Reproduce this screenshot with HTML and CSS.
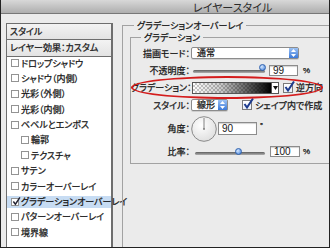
FILE: index.html
```html
<!DOCTYPE html>
<html lang="ja">
<head>
  <meta charset="UTF-8">
  <title>レイヤースタイル</title>
  <link rel="stylesheet" href="styles.css">
</head>
<body>
  <div class="window">
    <!-- タイトルバー -->
    <div class="titlebar">レイヤースタイル</div>

    <div class="main">
      <!-- 左のスタイル一覧 -->
      <div class="sidebar">
        <div class="side-head first">スタイル</div>
        <div class="side-head">レイヤー効果：カスタム</div>
        <ul class="fx-list">
          <li><span class="cb"></span>ドロップシャドウ</li>
          <li><span class="cb"></span>シャドウ（内側）</li>
          <li><span class="cb"></span>光彩（外側）</li>
          <li><span class="cb"></span>光彩（内側）</li>
          <li><span class="cb"></span>ベベルとエンボス</li>
          <li class="sub"><span class="cb"></span>輪郭</li>
          <li class="sub"><span class="cb"></span>テクスチャ</li>
          <li><span class="cb"></span>サテン</li>
          <li><span class="cb"></span>カラーオーバーレイ</li>
          <li class="on"><span class="cb checked"><svg viewBox="0 0 10 10"><path d="M1.5 5 3.8 8 8.8 0.5" /></svg></span>グラデーションオーバーレイ</li>
          <li><span class="cb"></span>パターンオーバーレイ</li>
          <li><span class="cb"></span>境界線</li>
        </ul>
      </div>

      <!-- 右の設定パネル -->
      <div class="panel">
        <fieldset class="group outer">
          <legend>グラデーションオーバーレイ</legend>
          <fieldset class="group inner">
            <legend>グラデーション</legend>

            <div class="row">
              <span class="lbl">描画モード：</span>
              <div class="select mode">
                <span class="val">通常</span>
                <span class="stepper"><svg width="5" height="8" viewBox="0 0 5 8"><path d="M2.5 0 5 3H0zM2.5 8 5 5H0z"/></svg></span>
              </div>
            </div>

            <div class="row">
              <span class="lbl">不透明度：</span>
              <div class="slider opacity">
                <span class="track"></span>
                <span class="thumb"></span>
              </div>
              <span class="num op-num">99</span>
              <span class="pct">%</span>
            </div>

            <div class="row">
              <span class="lbl">グラデーション：</span>
              <span class="grad"></span>
              <span class="grad-btn"><svg width="5" height="4" viewBox="0 0 5 4"><path d="M0 0H5L2.5 4z"/></svg></span>
              <span class="check"><svg viewBox="0 0 12 12"><path d="M2.5 6 5 9.5 11 0.5" /></svg></span>
              <span class="opt">逆方向</span>
            </div>

            <div class="row">
              <span class="lbl">スタイル：</span>
              <div class="select style-sel">
                <span class="val">線形</span>
                <span class="stepper"><svg width="5" height="8" viewBox="0 0 5 8"><path d="M2.5 0 5 3H0zM2.5 8 5 5H0z"/></svg></span>
              </div>
              <span class="check shape"><svg viewBox="0 0 12 12"><path d="M2.5 6 5 9.5 11 0.5" /></svg></span>
              <span class="opt">シェイプ内で作成</span>
            </div>

            <div class="row tall">
              <span class="lbl">角度：</span>
              <svg class="dial" width="26" height="26" viewBox="0 0 26 26">
                <defs>
                  <radialGradient id="dialFill" cx="40%" cy="35%" r="70%">
                    <stop offset="0" stop-color="#ffffff"/>
                    <stop offset="1" stop-color="#dedede"/>
                  </radialGradient>
                </defs>
                <circle cx="13" cy="13" r="12.3" fill="url(#dialFill)" stroke="#8a8a8a"/>
                <line x1="13" y1="13" x2="13" y2="2" stroke="#666" stroke-width="0.8"/>
                <circle cx="13" cy="13" r="0.9" fill="#777"/>
              </svg>
              <span class="num angle-num">90</span>
              <span class="deg">°</span>
            </div>

            <div class="row">
              <span class="lbl">比率：</span>
              <div class="slider ratio">
                <span class="track"></span>
                <span class="thumb"></span>
              </div>
              <span class="num ratio-num">100</span>
              <span class="pct narrow">%</span>
            </div>
          </fieldset>
        </fieldset>
      </div>
    </div>

    <!-- 赤い囲み（注釈） -->
    <div class="callout"></div>
  </div>
</body>
</html>
```

FILE: styles.css
```css
/* リセット */
* {
  margin: 0;
  padding: 0;
  box-sizing: border-box;
}
html, body {
  height: 100%;
}
body {
  font-family: "Noto Sans CJK JP", "Noto Sans", sans-serif;
  font-size: 9px;
  color: #161616;
  font-feature-settings: "palt";
  -webkit-text-stroke: 0.25px #161616;
  background: #ebebeb;
}
/* ウィンドウ全体 */
.window {
  position: relative;
  width: 330px;
  height: 248px;
  overflow: hidden;
  background: #ebebeb;
  border: 1px solid #222;
  border-top: none;
}
/* タイトルバー */
.titlebar {
  height: 14px;
  padding-left: 192px;
  background: linear-gradient(#d8d8d8, #aeaeae);
  border-bottom: 1px solid #777;
  font-size: 11px;
  line-height: 14px;
  color: #2a2a2a;
  -webkit-text-stroke: 0;
  white-space: nowrap;
}
.main {
  display: flex;
  align-items: flex-start;
}
/* 左の一覧 */
.sidebar {
  width: 107px;
  height: 240px;
  margin: 9px 0 0 5px;
  background: #fff;
  border: 1px solid #6e6e6e;
  border-right-width: 2px;
  flex: none;
}
.side-head {
  height: 17px;
  line-height: 16px;
  padding-left: 3px;
  background: linear-gradient(#f3f3f3, #e3e3e3);
  border-bottom: 1px solid #6e6e6e;
  white-space: nowrap;
}
.side-head.first {
  height: 16px;
  line-height: 15px;
}
.fx-list {
  list-style: none;
  display: flex;
  flex-direction: column;
  gap: 3.4px;
}
.fx-list li {
  display: flex;
  align-items: center;
  height: 12px;
  padding-left: 4px;
  white-space: nowrap;
}
.fx-list li.sub {
  padding-left: 14px;
}
.fx-list li.on {
  background: #c7dcf3;
}
.cb {
  position: relative;
  width: 8px;
  height: 8px;
  margin-right: 2px;
  border: 1px solid #939393;
  background: #fff;
  flex: none;
}
.cb svg {
  position: absolute;
  left: 0;
  top: -2px;
  width: 9px;
  height: 9px;
}
.cb svg path {
  fill: none;
  stroke: #223;
  stroke-width: 1.6;
}
/* 右パネル */
.panel {
  flex: none;
}
.group {
  border: 1px solid #a2a2a2;
}
.group legend {
  padding: 0 3px;
  line-height: 11px;
  white-space: nowrap;
}
.outer {
  width: 230px;
  height: 260px;
  margin: 6px 0 0 9px;
  padding: 0 0 0 7px;
}
.outer > legend {
  margin-left: 4px;
}
.inner {
  width: 210px;
  margin-top: 1px;
  padding: 3px 0 4px 0;
  display: flex;
  flex-direction: column;
  gap: 3.4px;
}
.inner > legend {
  margin-left: 10px;
}
.row {
  display: flex;
  align-items: center;
  height: 14px;
  white-space: nowrap;
}
.row.tall {
  height: 26px;
}
.lbl {
  width: 59px;
  text-align: right;
  flex: none;
}
/* ポップアップメニュー */
.select {
  display: flex;
  align-items: center;
  height: 12px;
  border: 1px solid #8c8c8c;
  border-radius: 2px;
  background: #fff;
  box-shadow: 0 1px 0 rgba(0, 0, 0, 0.12);
}
.select .val {
  flex: 1;
  padding-left: 5px;
  line-height: 10px;
}
.stepper {
  display: flex;
  align-items: center;
  justify-content: center;
  width: 9px;
  height: 10px;
  background: linear-gradient(#9cc2f4, #3b79d9);
}
.stepper svg path {
  fill: #fff;
}
.mode {
  width: 108px;
  margin-left: 1px;
}
.style-sel {
  width: 37px;
  margin-left: 1px;
}
/* スライダー */
.slider {
  position: relative;
  height: 10px;
  flex: none;
}
.track {
  position: absolute;
  left: 0;
  right: 0;
  top: 5px;
  height: 3px;
  border-radius: 2px;
  background: linear-gradient(#5e5e5e, #b0b0b0);
}
.thumb {
  position: absolute;
  top: 1px;
  width: 7px;
  height: 7px;
  border-radius: 50%;
  background: radial-gradient(circle at 35% 35%, #d6e8ff, #3c7cd6);
  border: 1px solid #2f62b0;
}
.opacity {
  width: 72px;
  margin-left: 3px;
}
.opacity .thumb {
  left: 66px;
  top: -1px;
}
.ratio {
  width: 70px;
  margin-left: 5px;
}
.ratio .thumb {
  left: 40px;
}
/* 数値入力 */
.num {
  height: 11px;
  padding-left: 3px;
  border: 1px solid #8c8c8c;
  background: #fff;
  box-shadow: inset 0 1px 1px rgba(0, 0, 0, 0.18);
  font-family: "Liberation Sans", sans-serif;
  font-size: 10px;
  line-height: 9px;
  -webkit-text-stroke: 0;
  flex: none;
}
.op-num {
  width: 29px;
  margin-left: 4px;
}
.ratio-num {
  width: 30px;
  margin-left: 5px;
}
.angle-num {
  width: 39px;
  height: 13px;
  line-height: 11px;
  margin-left: 1px;
}
.pct {
  margin-left: 5px;
  font-family: "Liberation Sans", sans-serif;
  font-size: 8px;
}
.pct.narrow {
  margin-left: 3px;
}
.deg {
  align-self: flex-start;
  margin: 4px 0 0 3px;
  font-size: 8px;
}
.dial {
  margin-left: 1px;
  flex: none;
}
/* グラデーション */
.grad {
  width: 80px;
  height: 12px;
  margin-left: 2px;
  border: 1px solid #555;
  background:
    linear-gradient(to right, rgba(0, 0, 0, 0) 0%, rgba(0, 0, 0, 0.2) 35%, #000 100%),
    repeating-conic-gradient(#c9c9c9 0 25%, #fff 0 50%) 0 0 / 4px 4px;
  flex: none;
}
.grad-btn {
  display: flex;
  align-items: center;
  justify-content: center;
  width: 7px;
  height: 12px;
  border: 1px solid #555;
  border-left: none;
  background: #fff;
  flex: none;
}
.grad-btn svg path {
  fill: #111;
}
/* チェックボックス */
.check {
  position: relative;
  width: 10px;
  height: 10px;
  margin-left: 4px;
  border: 1px solid #7a7a7a;
  background: linear-gradient(#fff, #e8eef8);
  flex: none;
}
.check svg {
  position: absolute;
  left: -1px;
  top: -3px;
  width: 12px;
  height: 12px;
}
.check svg path {
  fill: none;
  stroke: #1d3b8e;
  stroke-width: 2;
}
.check.shape {
  margin-left: 14px;
}
.opt {
  margin-left: 3px;
}
/* 注釈の赤い楕円 */
.callout {
  position: absolute;
  left: 130px;
  top: 76px;
  width: 192px;
  height: 23px;
  border: 2px solid #d41c1c;
  border-radius: 50%;
  pointer-events: none;
}
```
